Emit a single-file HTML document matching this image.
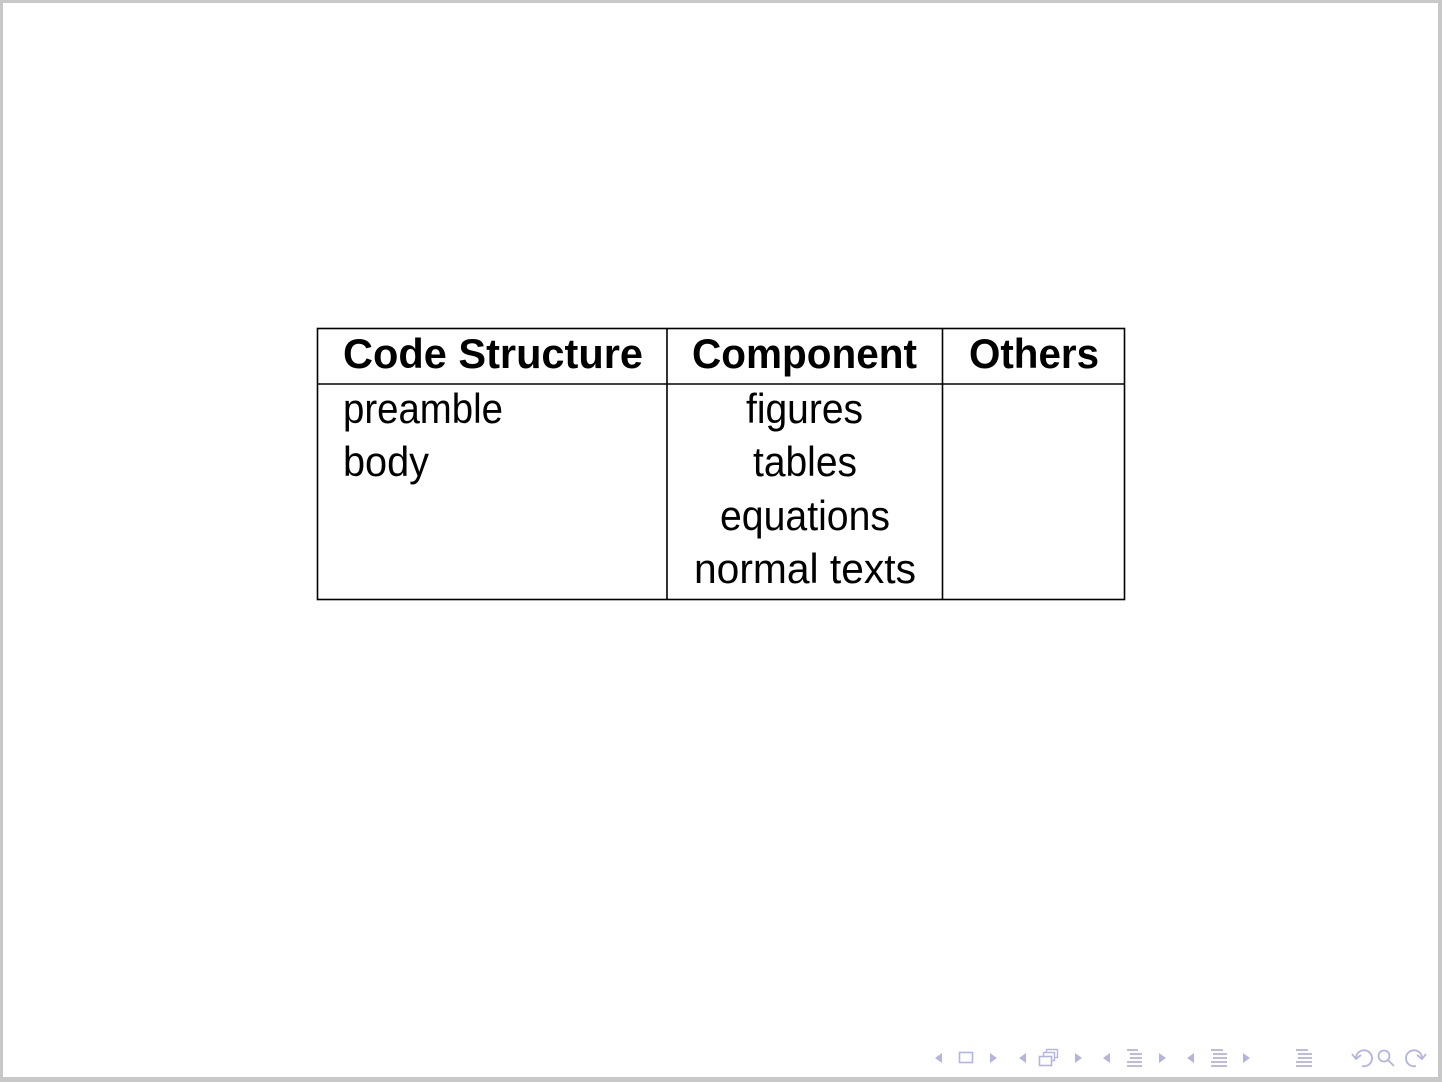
<!DOCTYPE html>
<html><head><meta charset="utf-8"><style>
html,body{margin:0;padding:0;background:#cfcfcf;}
svg{display:block}
</style></head><body>
<svg width="1442" height="1082" viewBox="0 0 1442 1082" xmlns="http://www.w3.org/2000/svg">
<rect x="0" y="0" width="1442" height="1082" fill="#c8c8c8"/>
<rect x="3" y="3" width="1435" height="1074" fill="#ffffff"/>
<g stroke="#000" stroke-width="1.6" fill="none">
<rect x="317.5" y="328.5" width="807" height="271"/>
<line x1="317" y1="384" x2="1125" y2="384"/>
<line x1="667" y1="328" x2="667" y2="600"/>
<line x1="942.5" y1="328" x2="942.5" y2="600"/>
</g>
<g font-family="Liberation Sans, sans-serif" font-size="42" fill="#000">
<g font-weight="bold">
<text x="343" y="368" textLength="300" lengthAdjust="spacingAndGlyphs">Code Structure</text>
<text x="692" y="368" textLength="225" lengthAdjust="spacingAndGlyphs">Component</text>
<text x="969" y="368" textLength="130" lengthAdjust="spacingAndGlyphs">Others</text>
</g>
<text x="343" y="423" textLength="160" lengthAdjust="spacingAndGlyphs">preamble</text>
<text x="343" y="476" textLength="86" lengthAdjust="spacingAndGlyphs">body</text>
<text x="746" y="423" textLength="117" lengthAdjust="spacingAndGlyphs">figures</text>
<text x="753" y="476" textLength="104" lengthAdjust="spacingAndGlyphs">tables</text>
<text x="720" y="530" textLength="170" lengthAdjust="spacingAndGlyphs">equations</text>
<text x="694" y="583" textLength="222" lengthAdjust="spacingAndGlyphs">normal texts</text>
</g>
<g fill="#b4b4e0" stroke="#b4b4e0">
<polygon points="942,1053 942,1063 935,1058" stroke="none"/>
<rect x="959.5" y="1052.5" width="13" height="10" fill="none" stroke-width="1.6"/>
<polygon points="990,1053 990,1063 997,1058" stroke="none"/>
<polygon points="1026,1053 1026,1063 1019,1058" stroke="none"/>
<rect x="1046.5" y="1049.5" width="11" height="8" fill="#fff" stroke-width="1.4"/>
<rect x="1043.5" y="1052.5" width="11" height="8" fill="#fff" stroke-width="1.4"/>
<rect x="1039.5" y="1056.5" width="12" height="9" fill="#fff" stroke-width="1.6"/>
<polygon points="1075,1053 1075,1063 1082,1058" stroke="none"/>
<polygon points="1110,1053 1110,1063 1103,1058" stroke="none"/>
<g stroke-width="1.8"><line x1="1127" y1="1050" x2="1138" y2="1050"/><line x1="1130" y1="1054" x2="1142" y2="1054"/><line x1="1130" y1="1058" x2="1142" y2="1058"/><line x1="1127" y1="1062" x2="1142" y2="1062"/><line x1="1127" y1="1066" x2="1142" y2="1066"/></g>
<polygon points="1159,1053 1159,1063 1166,1058" stroke="none"/>
<polygon points="1194,1053 1194,1063 1187,1058" stroke="none"/>
<g stroke-width="1.8"><line x1="1211" y1="1050" x2="1223" y2="1050"/><line x1="1213" y1="1054" x2="1227" y2="1054"/><line x1="1213" y1="1058" x2="1227" y2="1058"/><line x1="1211" y1="1062" x2="1227" y2="1062"/><line x1="1211" y1="1066" x2="1227" y2="1066"/></g>
<polygon points="1243,1053 1243,1063 1250,1058" stroke="none"/>
<g stroke-width="1.8"><line x1="1296" y1="1050" x2="1308" y2="1050"/><line x1="1298" y1="1054" x2="1312" y2="1054"/><line x1="1298" y1="1058" x2="1312" y2="1058"/><line x1="1296" y1="1062" x2="1312" y2="1062"/><line x1="1296" y1="1066" x2="1312" y2="1066"/></g>
<g fill="none" stroke-width="1.8">
<path d="M1356,1058 A8,8 0 1 1 1362,1066"/>
<polyline points="1352,1054 1356,1059 1361,1055"/>
<circle cx="1384" cy="1056" r="5.5"/>
<line x1="1388" y1="1060" x2="1394" y2="1066"/>
<path d="M1422,1058 A8,8 0 1 0 1416,1066"/>
<polyline points="1426,1054 1422,1059 1417,1055"/>
</g>
</g>
</svg>
</body></html>
